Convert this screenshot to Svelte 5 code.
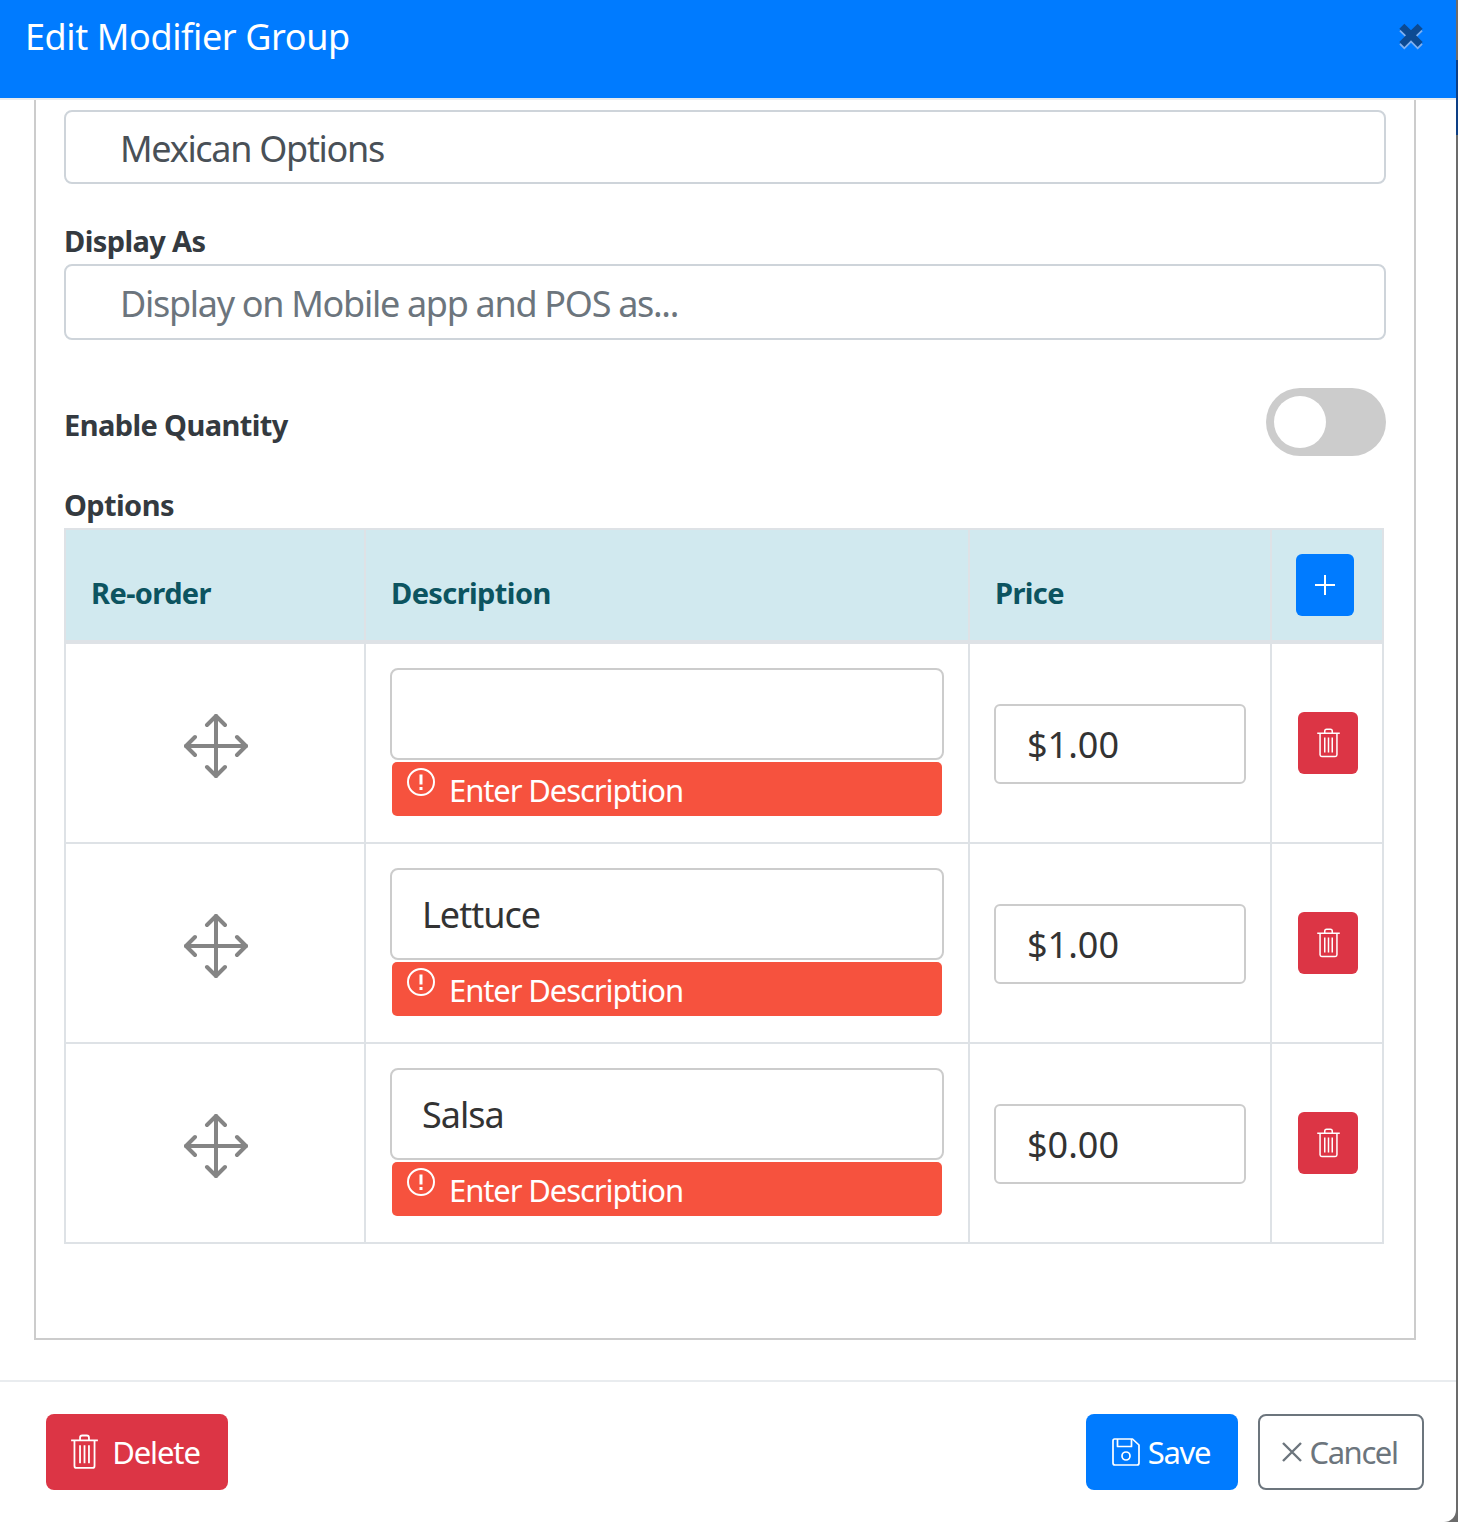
<script>
    const rows = [
        { description: '', price: '$1.00' },
        { description: 'Lettuce', price: '$1.00' },
        { description: 'Salsa', price: '$0.00' }
    ];
</script>

{#snippet trash()}
    <svg class="trash" viewBox="0 0 26 32" fill="none" stroke="currentColor" stroke-width="1.6">
        <path d="M1 5.500h24M9 5V3.200C9 2 10 1.200 11 1.200h4c1 0 2 .8 2 2V5" />
        <path d="M4 6v22.500c0 1 .8 1.800 1.800 1.800h14.400c1 0 1.800-.8 1.800-1.800V6" />
        <path d="M9 10v16M13 10v16M17 10v16" />
    </svg>
{/snippet}

<div class="modal">
    <header class="titlebar">
        <h1>Edit Modifier Group</h1>
        <svg class="close" viewBox="0 0 24 24">
            <path class="close-shade" d="M5 7l3-3 4 4 4-4 3 3-4 4 4 4-3 3-4-4-4 4-3-3 4-4z" transform="translate(0 1.500)" />
            <path class="close-x" d="M5 7l3-3 4 4 4-4 3 3-4 4 4 4-3 3-4-4-4 4-3-3 4-4z" />
        </svg>
    </header>

    <div class="body">
        <div class="panel">
            <input class="field" type="text" value="Mexican Options" />

            <label class="label display" for="display-as">Display As</label>
            <input id="display-as" class="field" type="text" placeholder="Display on Mobile app and POS as..." />

            <div class="quantity">
                <span class="label">Enable Quantity</span>
                <span class="switch"><span class="knob"></span></span>
            </div>

            <div class="label options">Options</div>
            <table>
                <thead>
                    <tr>
                        <th class="col-order">Re-order</th>
                        <th class="col-desc">Description</th>
                        <th class="col-price">Price</th>
                        <th class="col-act">
                            <button class="add" type="button">
                                <svg viewBox="0 0 22 22" fill="none" stroke="currentColor" stroke-width="2"><path d="M11 1v20M1 11h20" /></svg>
                            </button>
                        </th>
                    </tr>
                </thead>
                <tbody>
                    {#each rows as row}
                        <tr>
                            <td class="move-cell">
                                <svg class="move" viewBox="0 0 64 64" fill="none" stroke="#858585" stroke-width="4" stroke-linecap="round" stroke-linejoin="round">
                                    <path d="M32 2v60M2 32h60" />
                                    <path d="M23 11l9-9 9 9M23 53l9 9 9-9M11 23l-9 9 9 9M53 23l9 9-9 9" />
                                </svg>
                            </td>
                            <td class="desc-cell">
                                <input class="desc" type="text" value={row.description} />
                                <div class="error">
                                    <svg class="alert" viewBox="0 0 28 28" fill="none" stroke="#fff" stroke-width="2">
                                        <circle cx="14" cy="14" r="13" />
                                        <path d="M14 6.500v10M14 19v3" stroke-width="3" />
                                    </svg>
                                    <span>Enter Description</span>
                                </div>
                            </td>
                            <td class="price-cell"><input class="price" type="text" value={row.price} /></td>
                            <td class="act-cell">
                                <button class="remove" type="button">{@render trash()}</button>
                            </td>
                        </tr>
                    {/each}
                </tbody>
            </table>
        </div>
    </div>

    <footer class="actions">
        <button class="btn danger" type="button">{@render trash()}<span>Delete</span></button>
        <div class="right">
            <button class="btn primary" type="button">
                <svg class="save" viewBox="0 0 28 28" fill="none" stroke="currentColor" stroke-width="1.7" stroke-linejoin="round">
                    <path d="M2.500 1h18l6.500 6v18c0 1-.8 2-2 2H3c-1.200 0-2-1-2-2V3c0-1 .5-2 1.500-2z" />
                    <path d="M5.500 1v7.500h14V1" />
                    <circle cx="14" cy="18" r="4" />
                </svg>
                <span>Save</span>
            </button>
            <button class="btn outline" type="button">
                <svg class="cancel" viewBox="0 0 22 22" fill="none" stroke="currentColor" stroke-width="2.400"><path d="M2 2l18 18M20 2L2 20" /></svg>
                <span>Cancel</span>
            </button>
        </div>
    </footer>
</div>

<style>
    :global(body) {
        margin: 0;
        /* page behind the modal, only a sliver of it shows on the right */
        background: linear-gradient(to bottom, #6b6b6b 60px, #0d3f85 60px, #0d3f85 135px, #6b6b6b 135px);
        font-family: "Noto Sans", sans-serif;
    }

    .modal {
        width: 1456px;
        height: 1522px;
        background: #fff;
        border-bottom-right-radius: 12px;
        display: flex;
        flex-direction: column;
        overflow: hidden;
    }

    .titlebar {
        height: 98px;
        flex: none;
        box-sizing: border-box;
        background: #007bff;
        padding: 0 25px 0 25px;
        display: flex;
        align-items: flex-start;
        justify-content: space-between;
    }
    h1 {
        margin: 13px 0 0;
        color: #fff;
        font-size: 36px;
        font-weight: 400;
        line-height: 48px;
        letter-spacing: -.4px;
    }
    .close {
        width: 40px;
        height: 40px;
        margin-top: 17px;
    }
    .close-shade { fill: #7fb0f0; }
    .close-x { fill: #0c4a92; }

    .body {
        flex: 1;
        border-top: 2px solid #e9ecef;
        padding: 0 40px 0 34px;
    }
    .panel {
        height: 1240px;
        box-sizing: border-box;
        border: 2px solid #ccc;
        border-top: 0;
        padding: 10px 28px 0 28px;
    }

    .field {
        display: block;
        box-sizing: border-box;
        width: 100%;
        border: 2px solid #ced4da;
        border-radius: 8px;
        padding: 2px 54px 0;
        font: inherit;
        font-size: 36px;
        letter-spacing: -1.3px;
        color: #495057;
        background: #fff;
        height: 74px;
        outline: none;
    }
    .field::placeholder { color: #6c757d; opacity: 1; }

    .label {
        font-weight: 700;
        font-size: 29px;
        letter-spacing: -.6px;
        color: #343a40;
        line-height: 40px;
        display: block;
    }
    .display { margin-top: 37px; height: 43px; }
    #display-as { height: 76px; }

    .quantity {
        margin-top: 48px;
        display: flex;
        justify-content: space-between;
        align-items: center;
        height: 68px;
    }
    .quantity .label { padding-top: 6px; }
    .switch {
        width: 120px;
        height: 68px;
        border-radius: 34px;
        background: #ccc;
        display: flex;
        align-items: center;
        padding-left: 8px;
        box-sizing: border-box;
    }
    .knob {
        width: 52px;
        height: 52px;
        border-radius: 50%;
        background: #fff;
    }
    .options { margin-top: 29px; height: 40px; margin-bottom: 3px; }

    table {
        width: 1320px;
        border-collapse: collapse;
        table-layout: fixed;
    }
    th, td {
        border: 2px solid #dee2e6;
        padding: 0;
    }
    th {
        height: 113px;
        background: #d1e9ef;
        color: #0c5460;
        border-bottom-width: 4px;
        text-align: left;
        font-size: 29px;
        letter-spacing: -.6px;
        font-weight: 700;
        padding-left: 25px;
        padding-top: 14px;
        box-sizing: border-box;
    }
    td { height: 200px; box-sizing: border-box; }
    tbody tr:first-child td { height: 201px; }
    .col-order { width: 300px; }
    .col-desc { width: 604px; }
    .col-price { width: 302px; }
    .col-act { padding: 0 0 0 24px; vertical-align: top; }

    .add {
        display: flex;
        align-items: center;
        justify-content: center;
        width: 58px;
        height: 62px;
        margin-top: 24px;
        padding: 0;
        border: 0;
        border-radius: 6px;
        background: #007bff;
        color: #fff;
    }
    .add svg { width: 22px; height: 22px; }

    .move-cell { text-align: center; }
    .move { width: 64px; height: 64px; display: block; margin: 6px auto 0 118px; }

    .desc-cell { padding: 0 24px; vertical-align: top; }
    .desc {
        display: block;
        box-sizing: border-box;
        width: 100%;
        height: 92px;
        margin-top: 24px;
        border: 2px solid #ccc;
        border-radius: 8px;
        padding: 0 30px;
        font: inherit;
        font-size: 36px;
        letter-spacing: -1px;
        color: #333;
        outline: none;
    }
    .error {
        margin: 2px 2px 0;
        height: 54px;
        background: #f6523e;
        border-radius: 5px;
        color: #fff;
        font-size: 31px;
        letter-spacing: -1.1px;
        display: flex;
        align-items: flex-start;
    }
    .alert { width: 28px; height: 28px; margin: 6px 14px 0 15px; flex: none; }
    .error span { line-height: 57px; }

    .price-cell { padding: 0 24px; }
    .price {
        display: block;
        box-sizing: border-box;
        width: 252px;
        height: 80px;
        margin-top: 2px;
        border: 2px solid #ccc;
        border-radius: 6px;
        padding: 0 31px;
        font: inherit;
        font-size: 36px;
        color: #333;
        outline: none;
    }

    .act-cell { padding-left: 26px; }
    .remove {
        display: flex;
        align-items: center;
        justify-content: center;
        width: 60px;
        height: 62px;
        padding: 0;
        border: 0;
        border-radius: 6px;
        background: #dc3545;
        color: #fff;
    }
    .remove .trash { width: 25px; height: 30px; }

    .actions {
        flex: none;
        height: 142px;
        box-sizing: border-box;
        border-top: 2px solid #e9ecef;
        padding: 32px 32px 0 46px;
        display: flex;
        justify-content: space-between;
        align-items: flex-start;
    }
    .right { display: flex; gap: 20px; }
    .btn {
        height: 76px;
        box-sizing: border-box;
        border-radius: 8px;
        border: 0;
        padding: 0;
        display: flex;
        align-items: center;
        justify-content: center;
        font: inherit;
        font-size: 31px;
        letter-spacing: -1.1px;
        color: #fff;
    }
    .danger { width: 182px; background: #dc3545; gap: 13px; padding-right: 2px; }
    .danger .trash { width: 29px; height: 36px; margin-left: -2px; }
    .primary { width: 152px; background: #007bff; gap: 8px; padding-right: 2px; }
    .primary span { letter-spacing: -1.3px; }
    .save { width: 28px; height: 28px; }
    .outline { width: 166px; background: #fff; border: 2px solid #6c757d; color: #6c757d; gap: 6px; padding-right: 3px; }
    .outline span { letter-spacing: -1.4px; }
    .cancel { width: 22px; height: 22px; }
</style>
